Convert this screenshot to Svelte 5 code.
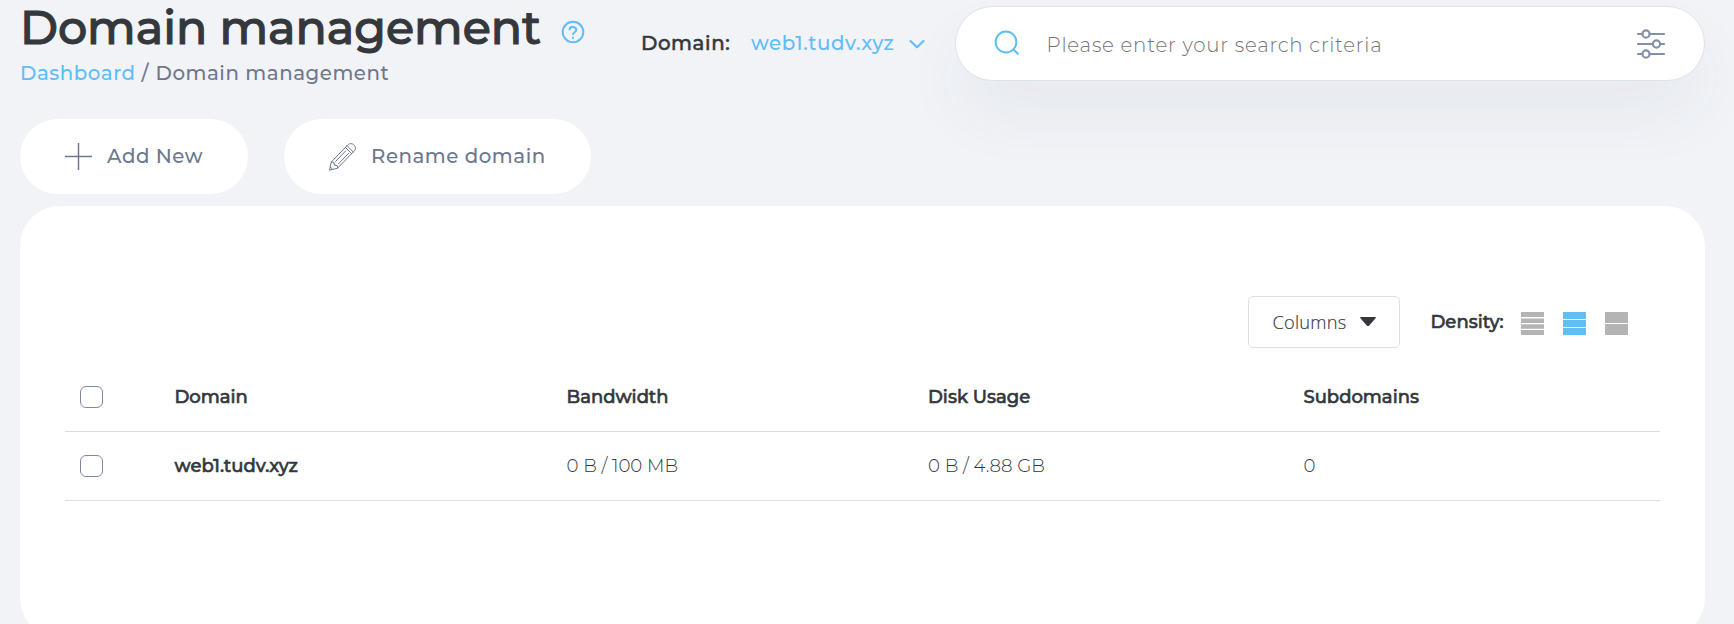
<script>
  const columns = ['Domain', 'Bandwidth', 'Disk Usage', 'Subdomains'];
  const rows = [
    { domain: 'web1.tudv.xyz', bandwidth: '0 B / 100 MB', disk: '0 B / 4.88 GB', subdomains: '0' }
  ];
  const densities = [
    { name: 'compact', bars: [[0, 5], [6.5, 4.5], [12.3, 4.5], [18, 5]] },
    { name: 'regular', bars: [[0, 7], [8, 7], [16, 7]] },
    { name: 'relaxed', bars: [[0, 11], [12, 11]] }
  ];
  let density = $state('regular');
</script>

<div class="page">
  <header>
    <div class="heading">
      <div class="title-row">
        <h1>Domain management</h1>
        <svg class="help" viewBox="0 0 24 24" width="24" height="24">
          <circle cx="12" cy="12" r="10.3" />
          <path d="M8.600 9.400a3.400 3.300 0 0 1 6.700.6c0 2.100-3.300 2.300-3.300 4.300M12 17.500v.4" />
        </svg>
      </div>
      <nav><a href="#dashboard">Dashboard</a><span class="sep">/</span><span class="current">Domain management</span></nav>
    </div>

    <div class="picker">
      <span class="picker-label">Domain:</span>
      <span class="picker-value">web1.tudv.xyz</span>
      <svg viewBox="0 0 16 10" width="16" height="10"><path d="M1.500 2 8 8.200 14.500 2" /></svg>
    </div>

    <div class="search">
      <svg class="magnifier" viewBox="0 0 26 26" width="26" height="26">
        <circle cx="12" cy="12" r="10.4" />
        <path d="m19.500 19.500 4.300 4.300" />
      </svg>
      <span class="placeholder">Please enter your search criteria</span>
      <svg class="sliders" viewBox="0 0 30 32" width="30" height="32">
        <path d="M2 6h4.500M13.500 6h14.500M2 16h14.500M24 16h4M2 26h4.500M13.500 26h14.500" />
        <circle cx="10" cy="6" r="3.600" />
        <circle cx="20.500" cy="16" r="3.600" />
        <circle cx="10" cy="26" r="3.600" />
      </svg>
    </div>
  </header>

  <div class="actions">
    <button class="add">
      <svg viewBox="0 0 28 28" width="28" height="28"><path d="M13.500 0v27M0 13.500h27" stroke-width="1.500" stroke-linecap="butt" /></svg>
      <span>Add New</span>
    </button>
    <button class="rename">
      <svg viewBox="0 0 28 28" width="28" height="28">
        <path d="M.6 26.800 2.300 19 18.700 2c2.200-2 4.700-1.600 6.300 0s2.200 4.100 0 6.300L8.700 25zM2.300 19l2.500.4.6 2.700 2.800.5.5 2.400M16.400 4.400l6.300 6.300M18 2.700l6.300 6.300M6.700 18.300 16.800 7.800M9.400 20.900 19.600 10.400M1.300 23.900l2.100 2.200" />
      </svg>
      <span>Rename domain</span>
    </button>
  </div>

  <main>
    <div class="toolbar">
      <button class="columns">
        <span>Columns</span>
        <svg viewBox="0 0 16 10" width="16" height="10"><path d="M.6 0h14.800q.8.500 0 1.400L9.200 8.600q-1.200 1-2.400 0L.6 1.400Q-.2.500.6 0z" /></svg>
      </button>
      <span class="density-label">Density:</span>
      <div class="densities">
        {#each densities as d}
          <button class:active={density === d.name} aria-label={d.name} onclick={() => (density = d.name)}>
            <svg viewBox="0 0 23 23" width="23" height="23">
              {#each d.bars as [y, h]}
                <rect x="0" {y} width="23" height={h} />
              {/each}
            </svg>
          </button>
        {/each}
      </div>
    </div>

    <div class="table">
      <div class="row head">
        <input type="checkbox" aria-label="all" />
        {#each columns as c}<span>{c}</span>{/each}
      </div>
      {#each rows as r}
        <div class="row">
          <input type="checkbox" aria-label={r.domain} />
          <span class="name">{r.domain}</span>
          <span>{r.bandwidth}</span>
          <span>{r.disk}</span>
          <span>{r.subdomains}</span>
        </div>
      {/each}
    </div>
  </main>
</div>

<style>
  :global(body) {
    background: #f1f3f7;
    overflow: hidden;
  }
  .page {
    box-sizing: border-box;
    height: 624px;
    padding: 0 29px 0 20px;
    overflow: hidden;
    font-family: Montserrat, Inter, sans-serif;
    color: #34383c;
    white-space: nowrap;
  }
  svg {
    display: block;
    flex: none;
    fill: none;
    stroke-linecap: round;
    stroke-linejoin: round;
  }
  button {
    border: 0;
    padding: 0;
    font: inherit;
    color: inherit;
    background: none;
    cursor: pointer;
  }
  header {
    display: flex;
    height: 119px;
  }
  .heading {
    width: 621px;
  }
  .title-row {
    display: flex;
    align-items: center;
    height: 56px;
  }
  h1 {
    width: 540.500px;
    margin: 0;
    font-size: 46px;
    line-height: 56px;
    font-weight: 500;
    letter-spacing: -0.050px;
    -webkit-text-stroke: 1.100px;
  }
  .help {
    margin-top: 7px;
    stroke: #5fbdf8;
    stroke-width: 2;
  }
  nav {
    display: flex;
    margin-top: 4px;
    font-size: 19.800px;
    line-height: 26px;
    color: #6d788e;
    letter-spacing: 0.550px;
    font-weight: 500;
  }
  nav a {
    width: 121.500px;
    color: #5fbdf8;
    text-decoration: none;
  }
  .sep {
    width: 14px;
  }
  .picker {
    display: flex;
    align-items: center;
    height: 86px;
    width: 314px;
    font-size: 19.800px;
    letter-spacing: 0.600px;
    font-weight: 500;
  }
  .picker-label {
    width: 110px;
    -webkit-text-stroke: 0.500px;
  }
  .picker-value {
    width: 158px;
    color: #5fbdf8;
  }
  .picker svg {
    stroke: #5fbdf8;
    stroke-width: 2.200;
    margin-top: 1px;
  }
  .search {
    display: flex;
    align-items: center;
    box-sizing: border-box;
    flex: 1;
    height: 75px;
    margin-top: 6px;
    padding: 0 38px;
    border: 1px solid #dce3ec;
    border-radius: 38px;
    background: #fff;
    box-shadow: 0 34px 64px rgba(60, 70, 100, 0.055);
  }
  .magnifier {
    margin-top: -1px;
    stroke: #5fbdf8;
    stroke-width: 2;
  }
  .placeholder {
    flex: 1;
    margin-left: 26.500px;
    padding-top: 2px;
    font-size: 19.800px;
    font-weight: 300;
    color: #757575;
    letter-spacing: 0.760px;
  }
  .sliders {
    stroke: #8490a8;
    stroke-width: 2.100;
  }
  .actions {
    display: flex;
    gap: 36px;
  }
  .actions button {
    display: flex;
    align-items: center;
    box-sizing: border-box;
    height: 75px;
    padding-left: 45px;
    border-radius: 38px;
    background: #fff;
    font-size: 19.800px;
    font-weight: 500;
    color: #6d788e;
    letter-spacing: 0.520px;
  }
  .actions span {
    margin-left: 14px;
    padding-bottom: 2px;
  }
  .actions svg {
    stroke: #6d788e;
  }
  .add {
    width: 228px;
  }
  .rename {
    width: 307px;
  }
  main {
    box-sizing: border-box;
    height: 432px;
    margin-top: 12px;
    padding: 90px 45px 0;
    border-radius: 40px;
    background: #fff;
  }
  .toolbar {
    display: flex;
    align-items: center;
    justify-content: flex-end;
    height: 52px;
    padding-right: 32px;
  }
  .columns {
    display: flex;
    align-items: center;
    justify-content: space-between;
    box-sizing: border-box;
    width: 152px;
    height: 52px;
    padding: 0 22.500px 0 24px;
    border: 1px solid #dddfe0;
    border-radius: 5px;
    font-family: "Open Sans", sans-serif;
    font-size: 18.300px;
    font-weight: 300;
    letter-spacing: 0.200px;
    -webkit-text-stroke: 0.150px;
  }
  .columns span {
    padding-bottom: 2px;
  }
  .columns svg {
    fill: #34383c;
  }
  .density-label {
    width: 90.500px;
    margin-left: 31px;
    font-size: 18px;
    font-weight: 500;
    -webkit-text-stroke: 0.600px;
  }
  .densities {
    display: flex;
    gap: 19px;
    margin-top: 3px;
  }
  .densities svg {
    fill: #b4b4b4;
  }
  .densities .active svg {
    fill: #5fbdf8;
  }
  .table {
    margin-top: 14px;
  }
  .row {
    display: grid;
    grid-template-columns: 94.500px 392px 361.500px 375.500px 1fr;
    align-items: center;
    box-sizing: border-box;
    height: 69px;
    padding: 0 0 0 15px;
    border-bottom: 1px solid #dcdddf;
    font-size: 18.200px;
    font-weight: 300;
  }
  .row span {
    padding-bottom: 2px;
  }
  .head {
    height: 70px;
    padding-top: 1px;
  }
  .head,
  .name {
    font-size: 18px;
    font-weight: 500;
    -webkit-text-stroke: 0.600px;
  }
  .head span,
  .row .name {
    padding-bottom: 0;
  }
  input {
    appearance: none;
    box-sizing: border-box;
    width: 23px;
    height: 22px;
    margin: 0;
    border: 1px solid #7e8aa3;
    border-radius: 6px;
    background: #fff;
  }
</style>
